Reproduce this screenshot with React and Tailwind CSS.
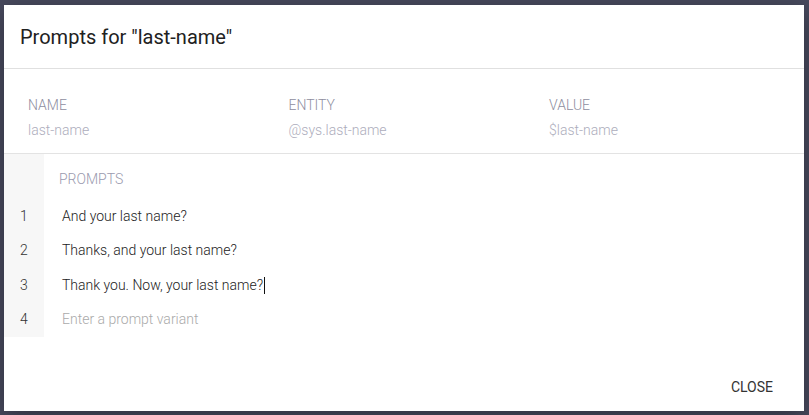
const fields = [
  { label: 'NAME', value: 'last-name' },
  { label: 'ENTITY', value: '@sys.last-name' },
  { label: 'VALUE', value: '$last-name' },
]

const prompts = ['And your last name?', 'Thanks, and your last name?', 'Thank you. Now, your last name?']

export default function App() {
  return (
    <div
      className="h-[415px] w-[809px] overflow-hidden bg-[#484a5e] pl-[4px] pt-[5px]"
      style={{ fontFamily: 'Roboto, "Liberation Sans", sans-serif' }}
    >
      <div className="flex h-[406px] w-[800px] flex-col bg-white shadow-[0_6px_24px_rgba(0,0,0,0.35)]">
        <div className="flex h-[64px] items-center border-b border-[#e0e0e0] px-4">
          <h2 className="text-[20px] font-normal text-[#212121]">Prompts for "last-name"</h2>
        </div>

        <div className="flex h-[85px] border-b border-[#e3e3e3] px-6 pt-[27px]">
          {fields.map((f) => (
            <div key={f.label} className="w-[260.5px] shrink-0">
              <div className="text-[14px] font-light leading-[18px] text-[#8e8ea0]">{f.label}</div>
              <div className="mt-[7px] text-[14px] font-light leading-[18px] text-[#adadbc]">{f.value}</div>
            </div>
          ))}
        </div>

        <div className="flex">
          <div className="flex w-[40px] flex-col bg-[#f7f7f7] pt-[45px]">
            {[1, 2, 3, 4].map((n) => (
              <div key={n} className="flex h-[34.5px] items-center pl-[16px] text-[14px] font-light text-[#333]">
                {n}
              </div>
            ))}
          </div>
          <div className="flex flex-1 flex-col pl-[15px]">
            <div className="flex h-[45px] items-center pt-[5px] text-[14px] font-light text-[#9a9aae]">PROMPTS</div>
            {prompts.map((p, i) => (
              <div key={p} className="flex h-[34.5px] items-center pl-[3px] text-[14px] font-light text-[#222]">
                {p}
                {i === 2 && <span className="ml-[1px] inline-block h-[17px] w-px bg-[#111]" />}
              </div>
            ))}
            <div className="flex h-[34.5px] items-center pl-[3px] text-[14px] font-light text-[#aaa]">Enter a prompt variant</div>
          </div>
        </div>

        <div className="mt-auto flex justify-end pb-[7px] pr-[23px]">
          <button className="rounded px-2 py-[6px] text-[14px] font-normal text-[#333]">CLOSE</button>
        </div>
      </div>
    </div>
  )
}
